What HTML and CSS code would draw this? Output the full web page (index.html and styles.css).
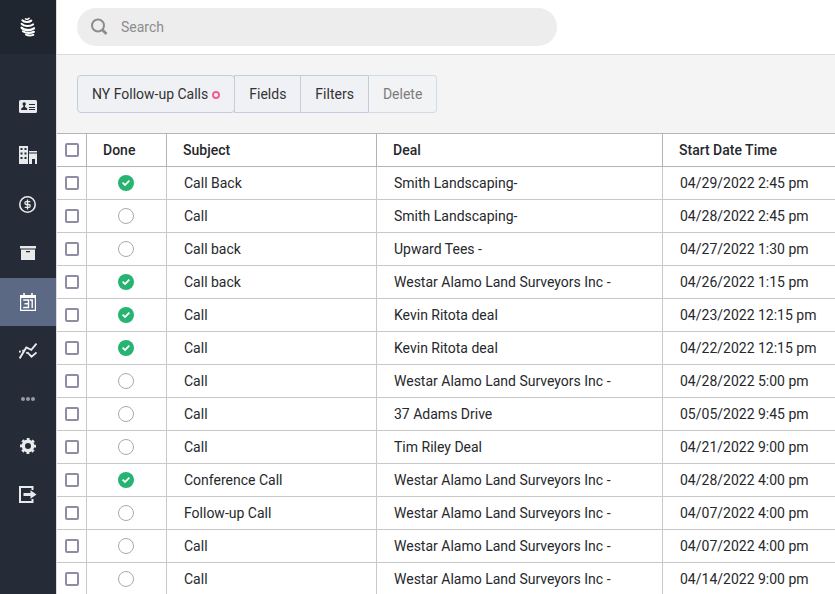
FILE: index.html
```html
<!DOCTYPE html>
<html lang="en">

<head>
    <meta charset="utf-8">
    <title>Calls</title>
    <link rel="stylesheet" href="styles.css">
</head>

<body>
    <aside class="sidebar">
        <a href="#" class="logo" aria-label="Home">
            <svg width="16" height="20" viewBox="0 0 16 20" fill="none" stroke="#fff" stroke-linecap="round">
                <path d="M5.500 1.800c1 .6 2.600.5 3.600-.5" stroke-width="1.500" />
                <path d="M2.500 3.400c1.600 2 6.500 2.200 8.700.3" stroke-width="2.200" />
                <path d="M1.700 6.900c2 2.500 8.500 2.900 11.300.6" stroke-width="2.200" />
                <path d="M1.600 10.600c2 2.900 9.200 3.300 12.400.7" stroke-width="2.300" />
                <path d="M3 14.300c2 1.900 7.800 2.200 10.900.5" stroke-width="2.200" />
                <path d="M6 17.600c2 1 5 1 7.300.2" stroke-width="1.900" />
            </svg>
        </a>
        <nav class="nav">
            <a href="#" class="nav-item" aria-label="Contacts">
                <svg width="18" height="14" viewBox="0 0 18 14">
                    <rect y="1" width="18" height="13" rx="1.500" fill="#e9eaec" />
                    <g fill="#252b37">
                        <circle cx="5.200" cy="5" r="1.700" />
                        <path d="M2.200 11V9.500l2.200-1.800V6h1.600v1.700l2.200 1.800V11z" />
                        <path d="M10 5h6v1h-6zM10 8h6v1h-6zM10 10h6v1h-6z" />
                    </g>
                </svg>
            </a>
            <a href="#" class="nav-item" aria-label="Companies">
                <svg width="18" height="18" viewBox="0 0 18 18" fill="#e9eaec">
                    <path fill-rule="evenodd" d="M0 0h9v18H0zM1.500 2v2h2V2zM5.500 2v2h2V2zM1.500 6.500v2h2v-2zM5.500 6.500v2h2v-2zM1.500 11v2h2v-2zM5.500 11v2h2v-2z" />
                    <path d="M10 5h8v1.500h-8zM10 7.500h8V18h-2v-5h-3v5h-3z" />
                </svg>
            </a>
            <a href="#" class="nav-item" aria-label="Deals">
                <svg width="18" height="18" viewBox="0 0 18 18" fill="none" stroke="#e9eaec">
                    <circle cx="8.500" cy="9.500" r="7.700" stroke-width="1.600" />
                    <path d="M11.300 6.700H7.200q-1.300 0-1.300 1.400t1.300 1.400h2.700q1.300 0 1.300 1.400t-1.300 1.400H5.700M8.500 4.500v10" stroke-width="1.300" />
                </svg>
            </a>
            <a href="#" class="nav-item" aria-label="Products">
                <svg width="16" height="14" viewBox="0 0 16 14" fill="#e9eaec">
                    <path d="M0 0h16v2.500H0z" />
                    <path fill-rule="evenodd" d="M1 3.500h14V14H1zM6 5v1.200h4V5z" />
                </svg>
            </a>
            <a href="#" class="nav-item active" aria-label="Calendar">
                <svg width="16" height="18" viewBox="0 0 16 18" fill="none" stroke="#fff">
                    <path d="M.6 2.500h14.800v14.800H.6z" stroke-width="1.200" />
                    <path d="M1 3.500h14" stroke-width="3" />
                    <path d="M4 0v3M12 0v3" stroke-width="1.600" />
                    <path d="M3.200 7h5.300v7.500H3.200M4.500 10.700h4M9.800 7h2.400v8" stroke-width="1.400" />
                </svg>
            </a>
            <a href="#" class="nav-item" aria-label="Reports">
                <svg width="18" height="16" viewBox="0 0 18 16" fill="none" stroke="#e9eaec">
                    <path d="M.6 15.400L7.300 4.500l5 2.300L17.500.6" stroke-width="1.900" />
                    <path d="M0 8.800l1.800-.5M3.200 7.800l1.600-.4M7.200 10.200l1.600-.5 3.700 4 5-4.200" stroke-width="1.800" />
                </svg>
            </a>
            <a href="#" class="nav-item more" aria-label="More">
                <svg width="14" height="4" viewBox="0 0 14 4" fill="#969aa3">
                    <circle cx="2" cy="2" r="2" />
                    <circle cx="7" cy="2" r="2" />
                    <circle cx="12" cy="2" r="2" />
                </svg>
            </a>
            <a href="#" class="nav-item more" aria-label="Settings">
                <svg width="16" height="16" viewBox="0 0 16 16" fill="none" stroke="#e9eaec">
                    <circle cx="8" cy="8" r="4.700" stroke-width="3.400" />
                    <circle cx="8" cy="8" r="6.900" stroke-width="2.200" stroke-dasharray="2.900 2.519" stroke-dashoffset="1.450" />
                </svg>
            </a>
            <a href="#" class="nav-item" aria-label="Log out">
                <svg width="18" height="18" viewBox="0 0 18 18">
                    <path d="M13.500 5V2H1v15h12.500v-3" fill="none" stroke="#e9eaec" stroke-width="2" />
                    <path d="M4.500 8h7V5.200l6 4.300-6 4.300V11h-7z" fill="#e9eaec" />
                </svg>
            </a>
        </nav>
    </aside>

    <main class="main">
        <header class="topbar">
            <label class="search">
                <svg width="18" height="18" viewBox="0 0 18 18" fill="none" stroke="#8c8c8c">
                    <circle cx="7" cy="7.500" r="6" stroke-width="2" />
                    <path d="M11 11.500l4.500 4.500" stroke-width="2.600" />
                </svg>
                <input type="text" placeholder="Search" aria-label="Search">
            </label>
        </header>

        <div class="toolbar">
            <button class="btn view">NY Follow-up Calls<span class="dot"></span></button>
            <button class="btn">Fields</button>
            <button class="btn">Filters</button>
            <button class="btn" disabled>Delete</button>
        </div>

        <table class="grid">
            <colgroup>
                <col class="col-select">
                <col class="col-done">
                <col class="col-subject">
                <col class="col-deal">
                <col>
            </colgroup>
            <thead>
                <tr>
                    <th class="select"><input type="checkbox" class="check" aria-label="Select all"></th>
                    <th>Done</th>
                    <th>Subject</th>
                    <th>Deal</th>
                    <th>Start Date Time</th>
                </tr>
            </thead>
            <tbody>
                <tr>
                    <td class="select"><input type="checkbox" class="check" aria-label="Select row"></td>
                    <td class="select"><input type="checkbox" class="done" aria-label="Done" checked></td>
                    <td>Call Back</td>
                    <td>Smith Landscaping-</td>
                    <td>04/29/2022 2:45 pm</td>
                </tr>
                <tr>
                    <td class="select"><input type="checkbox" class="check" aria-label="Select row"></td>
                    <td class="select"><input type="checkbox" class="done" aria-label="Done"></td>
                    <td>Call</td>
                    <td>Smith Landscaping-</td>
                    <td>04/28/2022 2:45 pm</td>
                </tr>
                <tr>
                    <td class="select"><input type="checkbox" class="check" aria-label="Select row"></td>
                    <td class="select"><input type="checkbox" class="done" aria-label="Done"></td>
                    <td>Call back</td>
                    <td>Upward Tees -</td>
                    <td>04/27/2022 1:30 pm</td>
                </tr>
                <tr>
                    <td class="select"><input type="checkbox" class="check" aria-label="Select row"></td>
                    <td class="select"><input type="checkbox" class="done" aria-label="Done" checked></td>
                    <td>Call back</td>
                    <td>Westar Alamo Land Surveyors Inc -</td>
                    <td>04/26/2022 1:15 pm</td>
                </tr>
                <tr>
                    <td class="select"><input type="checkbox" class="check" aria-label="Select row"></td>
                    <td class="select"><input type="checkbox" class="done" aria-label="Done" checked></td>
                    <td>Call</td>
                    <td>Kevin Ritota deal</td>
                    <td>04/23/2022 12:15 pm</td>
                </tr>
                <tr>
                    <td class="select"><input type="checkbox" class="check" aria-label="Select row"></td>
                    <td class="select"><input type="checkbox" class="done" aria-label="Done" checked></td>
                    <td>Call</td>
                    <td>Kevin Ritota deal</td>
                    <td>04/22/2022 12:15 pm</td>
                </tr>
                <tr>
                    <td class="select"><input type="checkbox" class="check" aria-label="Select row"></td>
                    <td class="select"><input type="checkbox" class="done" aria-label="Done"></td>
                    <td>Call</td>
                    <td>Westar Alamo Land Surveyors Inc -</td>
                    <td>04/28/2022 5:00 pm</td>
                </tr>
                <tr>
                    <td class="select"><input type="checkbox" class="check" aria-label="Select row"></td>
                    <td class="select"><input type="checkbox" class="done" aria-label="Done"></td>
                    <td>Call</td>
                    <td>37 Adams Drive</td>
                    <td>05/05/2022 9:45 pm</td>
                </tr>
                <tr>
                    <td class="select"><input type="checkbox" class="check" aria-label="Select row"></td>
                    <td class="select"><input type="checkbox" class="done" aria-label="Done"></td>
                    <td>Call</td>
                    <td>Tim Riley Deal</td>
                    <td>04/21/2022 9:00 pm</td>
                </tr>
                <tr>
                    <td class="select"><input type="checkbox" class="check" aria-label="Select row"></td>
                    <td class="select"><input type="checkbox" class="done" aria-label="Done" checked></td>
                    <td>Conference Call</td>
                    <td>Westar Alamo Land Surveyors Inc -</td>
                    <td>04/28/2022 4:00 pm</td>
                </tr>
                <tr>
                    <td class="select"><input type="checkbox" class="check" aria-label="Select row"></td>
                    <td class="select"><input type="checkbox" class="done" aria-label="Done"></td>
                    <td>Follow-up Call</td>
                    <td>Westar Alamo Land Surveyors Inc -</td>
                    <td>04/07/2022 4:00 pm</td>
                </tr>
                <tr>
                    <td class="select"><input type="checkbox" class="check" aria-label="Select row"></td>
                    <td class="select"><input type="checkbox" class="done" aria-label="Done"></td>
                    <td>Call</td>
                    <td>Westar Alamo Land Surveyors Inc -</td>
                    <td>04/07/2022 4:00 pm</td>
                </tr>
                <tr>
                    <td class="select"><input type="checkbox" class="check" aria-label="Select row"></td>
                    <td class="select"><input type="checkbox" class="done" aria-label="Done"></td>
                    <td>Call</td>
                    <td>Westar Alamo Land Surveyors Inc -</td>
                    <td>04/14/2022 9:00 pm</td>
                </tr>
            </tbody>
        </table>
    </main>
</body>

</html>
```

FILE: styles.css
```css
* {
    box-sizing: border-box;
}

body {
    display: flex;
    height: 100vh;
    margin: 0;
    overflow: hidden;
    background-color: #f4f4f4;
    color: #26282c;
    font-family: Roboto, sans-serif;
    font-size: 14px;
}

/* sidebar */
.sidebar {
    flex: none;
    width: 56px;
    background-color: #252b37;
}

.logo {
    display: flex;
    justify-content: center;
    align-items: center;
    height: 54px;
    background-color: #20262f;
}

.nav {
    display: flex;
    flex-direction: column;
    gap: 1px;
    padding-top: 28px;
}

.nav-item {
    display: flex;
    justify-content: center;
    align-items: center;
    height: 48px;
}

.nav-item.active {
    background-color: #5c6984;
}

.nav-item.more {
    height: 46px;
}

/* top */
.main {
    flex: 1;
    min-width: 0;
    border-left: 1px solid #dcdcdc;
}

.topbar {
    padding: 8px 20px;
    background-color: #fff;
    border-bottom: 1px solid #dcdcdc;
}

.search {
    display: flex;
    align-items: center;
    gap: 12px;
    max-width: 480px;
    height: 38px;
    padding: 0 14px;
    border-radius: 19px;
    background-color: #ededed;
}

.search input {
    flex: 1;
    padding: 0;
    border: 0;
    outline: 0;
    background: none;
    font: inherit;
}

.search input::placeholder {
    color: #8c8c8c;
}

.toolbar {
    display: flex;
    padding: 20px;
}

.btn {
    height: 38px;
    padding: 0 14px;
    border: 1px solid #c5cddd;
    background-color: #f0f1f5;
    color: #333;
    font: inherit;
}

.btn + .btn {
    margin-left: -1px;
}

.btn:first-child {
    border-radius: 4px;
}

.btn:last-child {
    border-radius: 0 4px 4px 0;
}

.btn:disabled {
    border-color: #d5d9e3;
    border-left-color: #c5cddd;
    background-color: #f2f3f5;
    color: #7d7d7d;
}

.view {
    display: flex;
    align-items: center;
    gap: 4px;
}

.dot {
    width: 8px;
    height: 8px;
    margin-top: 2px;
    border: 2px solid #f0608c;
    border-radius: 50%;
}

/* table */
.grid {
    width: 100%;
    table-layout: fixed;
    border-spacing: 0;
    border-top: 1px solid #b4b4b4;
    background-color: #fff;
}

.col-select {
    width: 30px;
}

.col-done {
    width: 80px;
}

.col-subject {
    width: 210px;
}

.col-deal {
    width: 286px;
}

.grid th,
.grid td {
    height: 33px;
    padding: 0 16px;
    border-right: 1px solid #c8c8c8;
    border-bottom: 1px solid #c8c8c8;
    text-align: left;
    white-space: nowrap;
}

.grid th {
    border-color: #b4b4b4;
    font-weight: 500;
}

.grid td {
    padding-left: 17px;
}

.grid th:last-child,
.grid td:last-child {
    border-right: 0;
}

.grid .select {
    padding: 0;
    text-align: center;
}

.check,
.done {
    appearance: none;
    display: block;
    margin: 0 auto;
}

.check {
    width: 14px;
    height: 14px;
    border: 2px solid #8f8da2;
    border-radius: 2px;
    background-color: #fff;
}

.check:checked {
    background-color: #8f8da2;
}

.done {
    width: 16px;
    height: 16px;
    margin-left: 31px;
    border: 1px solid #aaa;
    border-radius: 50%;
}

.done:checked {
    border: 0;
    background-color: #27b371;
}

.done:checked::after {
    content: "";
    display: block;
    width: 16px;
    height: 16px;
    background-color: #fff;
    clip-path: polygon(25% 51%, 33% 43%, 44% 54%, 67% 31%, 75% 39%, 44% 70%);
}
```
